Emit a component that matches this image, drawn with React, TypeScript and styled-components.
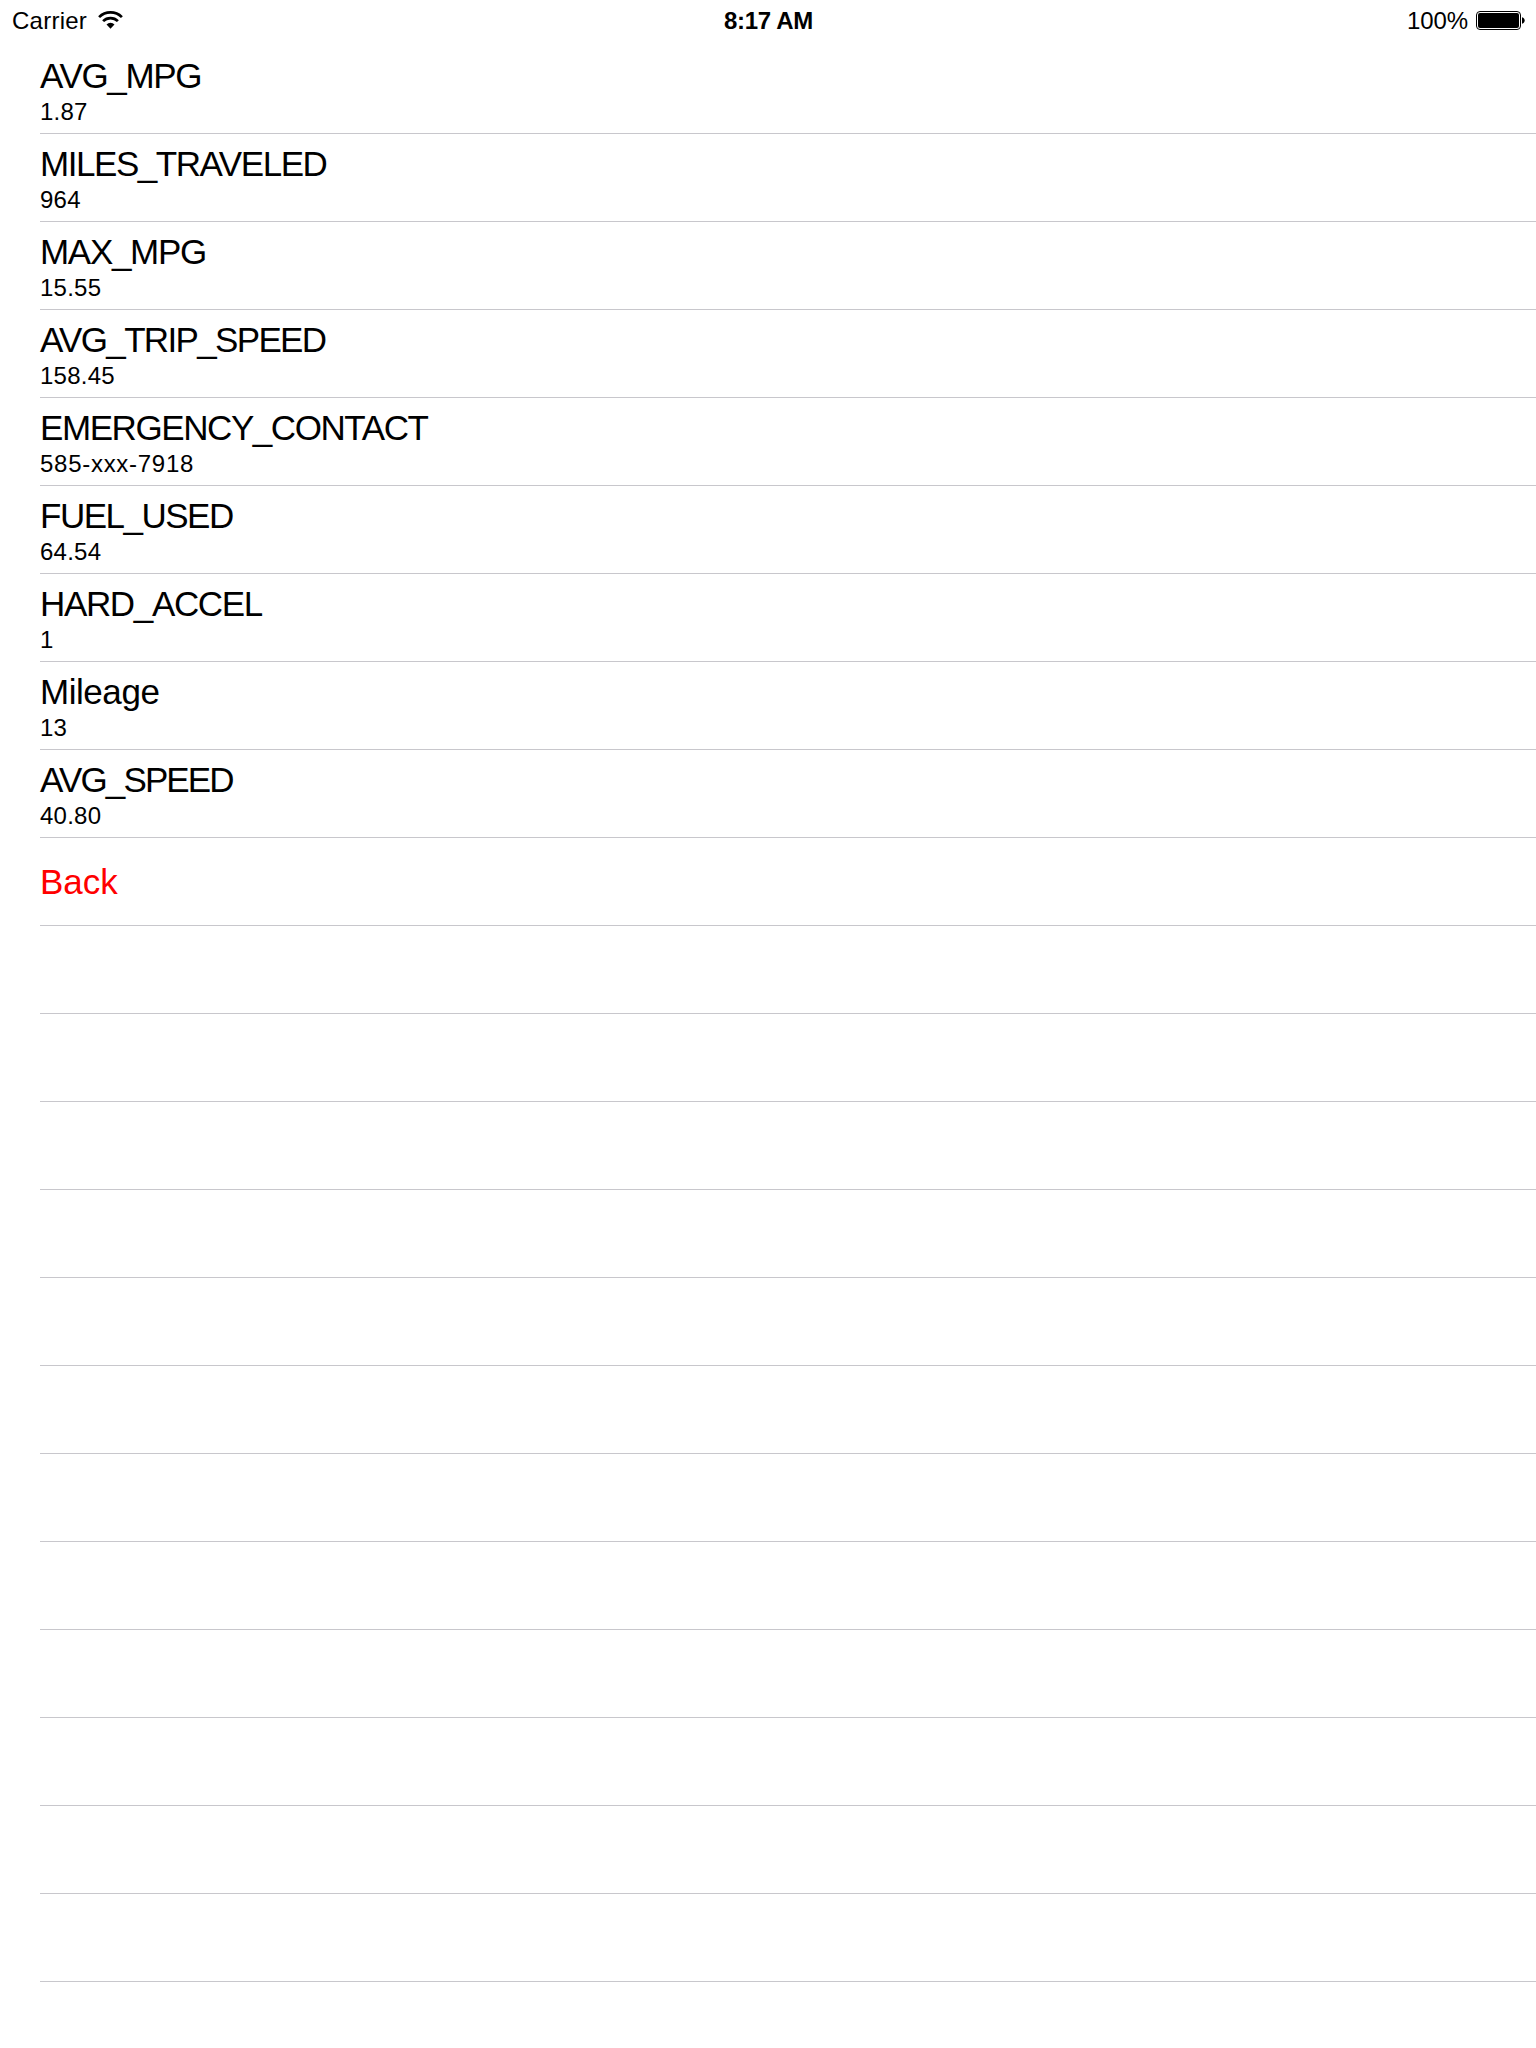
import React from "react";
import styled, { createGlobalStyle } from "styled-components";

const Global = createGlobalStyle`
  * { box-sizing: border-box; }
  body { margin: 0; background: #fff; }
`;

const Screen = styled.main`
  width: 1536px;
  height: 2048px;
  overflow: hidden;
  background: #fff;
  color: #000;
  font-family: "Liberation Sans", Arial, sans-serif;
`;

const StatusBar = styled.header`
  display: grid;
  grid-template-columns: 1fr auto 1fr;
  align-items: center;
  height: 40px;
  padding: 2px 11px 0 12px;
  font-size: 24px;
  line-height: 28px;
`;

const Group = styled.div<{ $end?: boolean }>`
  display: flex;
  align-items: center;
  justify-content: ${(p) => (p.$end ? "flex-end" : "flex-start")};
  gap: ${(p) => (p.$end ? 8 : 11)}px;
`;

const Carrier = styled.span`
  letter-spacing: 0.25px;
`;

const Clock = styled.span`
  font-weight: 700;
  letter-spacing: -0.3px;
`;

const Percent = styled.span`
  letter-spacing: -0.1px;
`;

const WifiIcon = styled.svg`
  flex: none;
  margin-top: -2px;
`;

const BatteryIcon = styled.svg`
  flex: none;
  margin-top: -1px;
`;

const Table = styled.ul`
  margin: 0;
  padding: 6px 0 0 40px;
  list-style: none;
`;

const Row = styled.li<{ $centered?: boolean }>`
  display: flex;
  flex-direction: column;
  justify-content: ${(p) => (p.$centered ? "center" : "flex-start")};
  height: 88px;
  padding-top: ${(p) => (p.$centered ? 1 : 10)}px;
  border-bottom: 1px solid #c8c7cc;
`;

const Title = styled.span<{ $spacing?: number; $color?: string }>`
  color: ${(p) => p.$color ?? "#000"};
  font-size: 35px;
  line-height: 40px;
  letter-spacing: ${(p) => p.$spacing ?? 0}px;
`;

const Detail = styled.span<{ $spacing?: number }>`
  margin-top: 1px;
  font-size: 24px;
  line-height: 30px;
  letter-spacing: ${(p) => p.$spacing ?? 0.25}px;
`;

const rows = [
  { title: "AVG_MPG", detail: "1.87", spacing: -1.35 },
  { title: "MILES_TRAVELED", detail: "964", spacing: -1.45 },
  { title: "MAX_MPG", detail: "15.55", spacing: -1.3 },
  { title: "AVG_TRIP_SPEED", detail: "158.45", spacing: -1.66 },
  { title: "EMERGENCY_CONTACT", detail: "585-xxx-7918", spacing: -1.42, detailSpacing: 0.72 },
  { title: "FUEL_USED", detail: "64.54", spacing: -1.5 },
  { title: "HARD_ACCEL", detail: "1", spacing: -1.35 },
  { title: "Mileage", detail: "13", spacing: -0.45 },
  { title: "AVG_SPEED", detail: "40.80", spacing: -1.85 },
];

const Wifi = () => (
  <WifiIcon width="25" height="18" viewBox="0 0 25 18">
    <g fill="none" stroke="#000" strokeWidth="2.7">
      <path d="M1.1 6.1a16.2 16.2 0 0 1 22.8 0" />
      <path d="M5.1 10.1a10.5 10.5 0 0 1 14.8 0" />
    </g>
    <path d="M8.5 13.400a5.700 5.700 0 0 1 8 0L12.500 17.700z" />
  </WifiIcon>
);

const Battery = () => (
  <BatteryIcon width="49" height="19" viewBox="0 0 49 19">
    <rect x="0.5" y="0.5" width="44" height="18" rx="3.5" fill="none" stroke="#000" />
    <rect x="2" y="2" width="41" height="15" rx="2" />
    <path d="M46 6.2c3.6.8 3.6 5.8 0 6.6z" />
  </BatteryIcon>
);

export default function App() {
  return (
    <Screen>
      <Global />
      <StatusBar>
        <Group>
          <Carrier>Carrier</Carrier>
          <Wifi />
        </Group>
        <Clock>8:17 AM</Clock>
        <Group $end>
          <Percent>100%</Percent>
          <Battery />
        </Group>
      </StatusBar>
      <Table>
        {rows.map((r) => (
          <Row key={r.title}>
            <Title $spacing={r.spacing}>{r.title}</Title>
            <Detail $spacing={r.detailSpacing}>{r.detail}</Detail>
          </Row>
        ))}
        <Row $centered>
          <Title $color="#ff0000">Back</Title>
        </Row>
        {Array.from({ length: 12 }, (_, i) => (
          <Row key={i} />
        ))}
      </Table>
    </Screen>
  );
}
